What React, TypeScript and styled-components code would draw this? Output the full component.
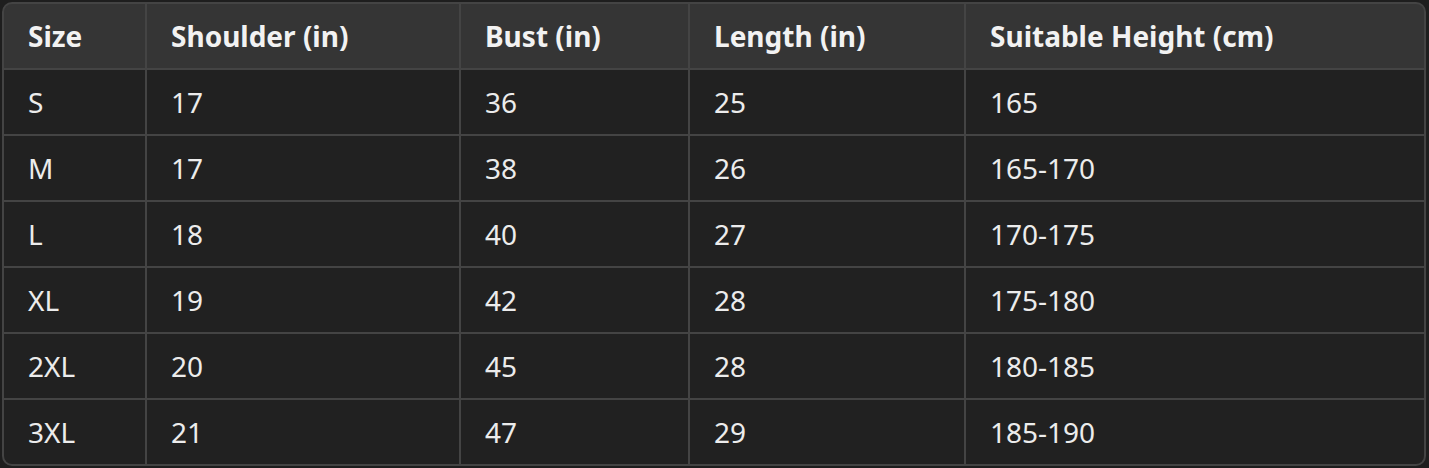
import React from 'react';
import styled, { createGlobalStyle } from 'styled-components';

const GlobalStyle = createGlobalStyle`
  body {
    margin: 0;
    background: #1e1e1e;
    font-family: "Noto Sans", "Open Sans", sans-serif;
  }
`;

const Page = styled.div`
  padding: 2px;
`;

const Grid = styled.div`
  display: grid;
  grid-template-columns: 141px 312px 227px 274px 458px;
  grid-auto-rows: 64px;
  gap: 2px;
  width: max-content;
  background: #444444;
  border: 2px solid #444444;
  border-radius: 10px;
  overflow: hidden;
`;

const Cell = styled.div<{ head?: boolean }>`
  display: flex;
  align-items: center;
  padding: 0 24px;
  background: ${({ head }) => (head ? '#353535' : '#212121')};
  color: ${({ head }) => (head ? '#f2f2f2' : '#ececec')};
  font-size: 28px;
  font-weight: ${({ head }) => (head ? 700 : 400)};
  white-space: nowrap;
`;

const headers = ['Size', 'Shoulder (in)', 'Bust (in)', 'Length (in)', 'Suitable Height (cm)'];

const rows = [
  ['S', '17', '36', '25', '165'],
  ['M', '17', '38', '26', '165-170'],
  ['L', '18', '40', '27', '170-175'],
  ['XL', '19', '42', '28', '175-180'],
  ['2XL', '20', '45', '28', '180-185'],
  ['3XL', '21', '47', '29', '185-190'],
];

const App: React.FC = () => {
  return (
    <Page>
      <GlobalStyle />
      <Grid>
        {headers.map((h) => (
          <Cell head key={h}>{h}</Cell>
        ))}
        {rows.map((r) =>
          r.map((v, i) => <Cell key={r[0] + i}>{v}</Cell>)
        )}
      </Grid>
    </Page>
  );
};

export default App;
